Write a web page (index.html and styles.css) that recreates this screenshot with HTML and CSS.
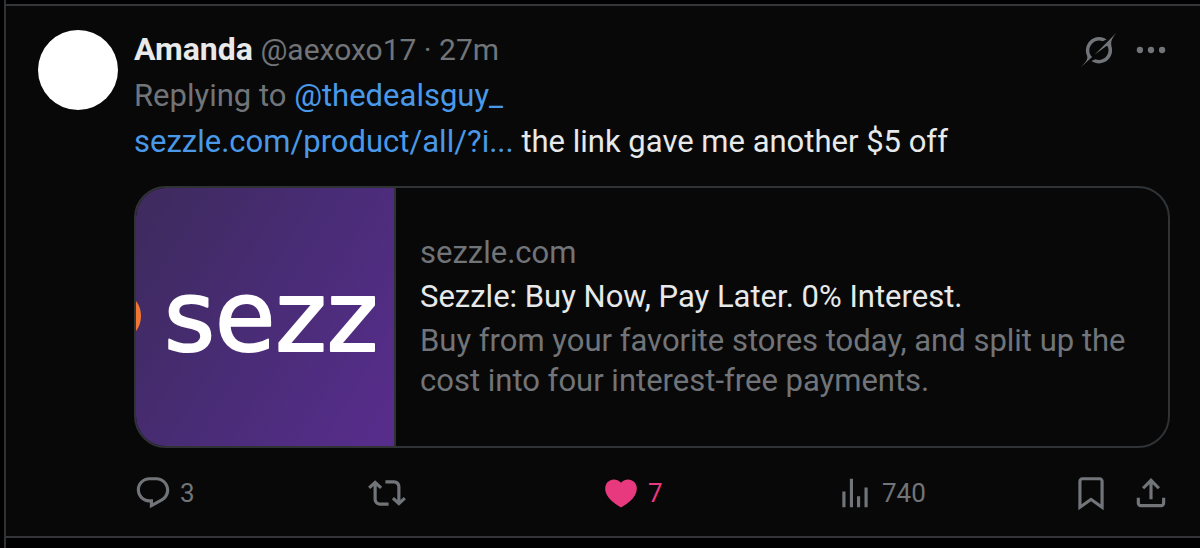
FILE: index.html
```html
<!DOCTYPE html>
<html lang="en">
<head>
<meta charset="utf-8">
<meta name="viewport" content="width=device-width, initial-scale=1">
<title>Amanda on X</title>
<link rel="stylesheet" href="styles.css">
</head>
<body>
<main class="timeline">
  <article class="post">
    <div class="avatar"></div>
    <div class="content">
      <header class="post-header">
        <div class="byline"><strong class="name">Amanda</strong> <span>@aexoxo17</span> <span>·</span> <time>27m</time></div>
        <div class="header-tools">
          <button class="icon-button" type="button" aria-label="Explain this post">
            <svg class="icon-slash" viewBox="0 0 33 32"><path d="M12.745 20.54l10.97-8.19c.539-.4 1.307-.244 1.564.38 1.349 3.288.746 7.241-1.938 9.955-2.683 2.714-6.417 3.31-9.83 1.954l-3.728 1.745c5.347 3.697 11.84 2.782 15.898-1.324 3.219-3.255 4.216-7.692 3.284-11.693l.008.009c-1.351-5.878.332-8.227 3.782-13.031L33 0l-4.54 4.59v-.014L12.743 20.544m-2.263 1.987c-3.837-3.707-3.175-9.446.1-12.755 2.42-2.449 6.388-3.448 9.852-1.979l3.72-1.737c-.67-.49-1.53-1.017-2.515-1.387-4.455-1.854-9.789-.931-13.41 2.728-3.483 3.523-4.579 8.94-2.697 13.561 1.405 3.454-.899 5.898-3.22 8.364C1.49 30.2.666 31.074 0 32l10.478-9.466"/></svg>
          </button>
          <button class="icon-button" type="button" aria-label="More">
            <svg class="icon" viewBox="0 0 24 24"><circle cx="5" cy="12" r="2"/><circle cx="12" cy="12" r="2"/><circle cx="19" cy="12" r="2"/></svg>
          </button>
        </div>
      </header>
      <p class="replying">Replying to <a class="link" href="#">@thedealsguy_</a></p>
      <p class="message"><a class="link" href="#">sezzle.com/product/all/?i...</a> the link gave me another $5 off</p>

      <a class="card" href="#">
        <svg class="card-image" viewBox="0 0 258 258" role="img" aria-label="Sezzle logo">
          <defs>
            <linearGradient id="purple" x1="0" y1="0.2" x2="1" y2="0.8">
              <stop offset="0" stop-color="#3f2b60"/>
              <stop offset="0.5" stop-color="#492c76"/>
              <stop offset="1" stop-color="#562d8a"/>
            </linearGradient>
          </defs>
          <rect width="258" height="258" fill="url(#purple)"/>
          <ellipse cx="-10" cy="128" rx="15" ry="20" fill="#f07632"/>
          <text class="wordmark" x="28" y="163">sezz</text>
        </svg>
        <div class="card-text">
          <span class="muted card-domain">sezzle.com</span>
          <span class="card-title">Sezzle: Buy Now, Pay Later. 0% Interest.</span>
          <span class="muted">Buy from your favorite stores today, and split up the cost into four interest-free payments.</span>
        </div>
      </a>

      <div class="actions">
        <div class="action-cell">
          <button class="icon-button" type="button" aria-label="3 replies">
            <svg class="icon" viewBox="0 0 24 24"><path d="M1.751 10c0-4.42 3.584-8 8.005-8h4.366c4.49 0 8.129 3.64 8.129 8.13 0 2.96-1.607 5.68-4.196 7.11l-8.054 4.46v-3.69h-.067c-4.49.1-8.183-3.51-8.183-8.01zm8.005-6c-3.317 0-6.005 2.69-6.005 6 0 3.37 2.77 6.08 6.138 6.01l.351-.01h1.761v2.3l5.087-2.81c1.951-1.08 3.163-3.13 3.163-5.36 0-3.39-2.744-6.13-6.129-6.13H9.756z"/></svg>
            <span>3</span>
          </button>
        </div>
        <div class="action-cell">
          <button class="icon-button" type="button" aria-label="Repost">
            <svg class="icon" viewBox="0 0 24 24"><path d="M4.5 3.88l4.432 4.14-1.364 1.46L5.5 7.55V16c0 1.1.896 2 2 2H13v2H7.5c-2.209 0-4-1.79-4-4V7.55L1.432 9.48.068 8.02 4.5 3.88zM16.5 6H11V4h5.5c2.209 0 4 1.79 4 4v8.45l2.068-1.93 1.364 1.46-4.432 4.14-4.432-4.14 1.364-1.46 2.068 1.93V8c0-1.1-.896-2-2-2z"/></svg>
          </button>
        </div>
        <div class="action-cell">
          <button class="icon-button liked" type="button" aria-label="7 likes" aria-pressed="true">
            <svg class="icon" viewBox="0 0 24 24"><path d="M20.884 13.19c-1.351 2.48-4.001 5.12-8.379 7.67l-.503.3-.504-.3c-4.379-2.55-7.029-5.19-8.382-7.67-1.36-2.5-1.41-4.86-.514-6.67.887-1.79 2.647-2.91 4.601-3.01 1.651-.09 3.368.56 4.798 2.01 1.429-1.45 3.146-2.1 4.796-2.01 1.954.1 3.714 1.22 4.601 3.01.896 1.81.846 4.17-.514 6.67z"/></svg>
            <span>7</span>
          </button>
        </div>
        <div class="action-cell">
          <button class="icon-button" type="button" aria-label="740 views">
            <svg class="icon" viewBox="0 0 24 24"><path d="M8.75 21V3h2v18h-2zM18 21V8.5h2V21h-2zM4 21l.004-10h2L6 21H4zm9.248 0v-7h2v7h-2z"/></svg>
            <span>740</span>
          </button>
        </div>
        <div class="action-end">
          <button class="icon-button" type="button" aria-label="Bookmark">
            <svg class="icon" viewBox="0 0 24 24"><path d="M4 4.5C4 3.12 5.119 2 6.5 2h11C18.881 2 20 3.12 20 4.5v18.44l-8-5.71-8 5.71V4.5zM6.5 4c-.276 0-.5.22-.5.5v14.56l6-4.29 6 4.29V4.5c0-.28-.224-.5-.5-.5h-11z"/></svg>
          </button>
          <button class="icon-button" type="button" aria-label="Share">
            <svg class="icon" viewBox="0 0 24 24"><path d="M12 2.59l5.7 5.7-1.41 1.42L13 6.41V16h-2V6.41l-3.3 3.3-1.41-1.42L12 2.59zM21 15l-.02 3.51c0 1.38-1.12 2.49-2.5 2.49H5.5C4.11 21 3 19.88 3 18.5V15h2v3.5c0 .28.22.5.5.5h12.98c.28 0 .5-.22.5-.5L19 15h2z"/></svg>
          </button>
        </div>
      </div>
    </div>
  </article>
</main>
</body>
</html>
```

FILE: styles.css
```css
* {
  box-sizing: border-box;
}

body {
  margin: 0;
  background: #000;
  color: #e7e9ea;
  font-family: Roboto, "Liberation Sans", sans-serif;
  font-size: 31px;
  line-height: 40px;
}

.timeline {
  min-height: 100vh;
  margin-left: 4px;
  padding-top: 4px;
  border-left: 2px solid #2f3336;
}

.post {
  display: flex;
  gap: 16px;
  padding: 24px 30px 24px 32px;
  border-top: 2px solid #333538;
  border-bottom: 2px solid #333538;
  background: #080808;
}

.avatar {
  flex: none;
  width: 80px;
  height: 80px;
  border-radius: 50%;
  background: #fff;
}

.content {
  flex: 1;
  min-width: 0;
}

.post-header {
  display: flex;
  justify-content: space-between;
  color: #717478;
}

.byline {
  font-size: 30px;
}

.name {
  color: #e7e9ea;
  font-size: 32px;
  font-weight: 700;
  line-height: 32px;
}

.header-tools {
  display: flex;
  align-items: center;
  gap: 16px;
}

.icon-button {
  display: flex;
  align-items: center;
  gap: 8px;
  padding: 0;
  border: 0;
  background: none;
  color: #717478;
  font: inherit;
  font-size: 26px;
  line-height: 38px;
  cursor: pointer;
}

.liked {
  color: #e8397f;
}

.icon {
  display: block;
  width: 38px;
  height: 38px;
  fill: currentColor;
}

.icon-slash {
  display: block;
  width: 35px;
  height: 34px;
  fill: currentColor;
}

.replying,
.message {
  margin: 6px 0 0;
}

.replying,
.muted {
  color: #717478;
}

.link {
  color: #4a99e9;
  text-decoration: none;
}

.card {
  display: flex;
  margin-top: 24px;
  overflow: hidden;
  border: 2px solid #2f3336;
  border-radius: 32px;
  color: inherit;
  text-decoration: none;
}

.card-image {
  flex: none;
  width: 258px;
  height: 258px;
}

.wordmark {
  fill: #fff;
  stroke: #fff;
  stroke-width: 2px;
  stroke-linejoin: round;
  font-family: "DejaVu Sans", sans-serif;
  font-size: 98px;
}

.card-text {
  display: flex;
  flex: 1;
  flex-direction: column;
  justify-content: center;
  padding: 0 24px;
  border-left: 2px solid #2f3336;
}

.card-domain,
.card-title {
  margin-bottom: 4px;
}

.actions {
  display: flex;
  margin-top: 26px;
}

.action-cell {
  flex: 1;
}

.action-end {
  display: flex;
  gap: 22px;
  padding-left: 2px;
}
```
